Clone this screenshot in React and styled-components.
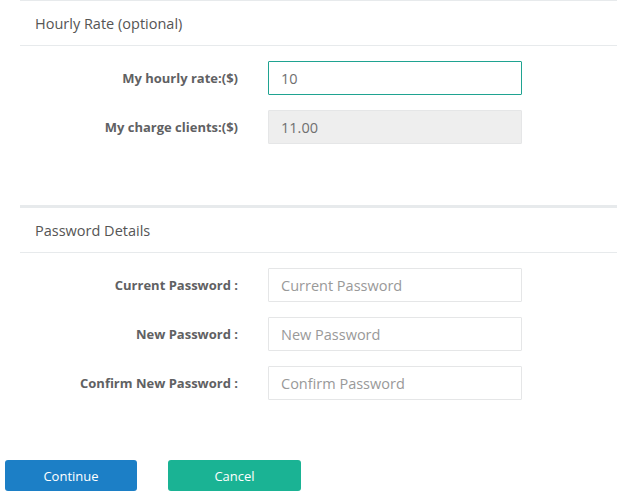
import React from 'react'
import styled, { createGlobalStyle } from 'styled-components'

const Global = createGlobalStyle`
  html, body {
    margin: 0;
    padding: 0;
    background: #fff;
    font-family: "Open Sans", "Liberation Sans", Arial, sans-serif;
    color: #676a6c;
  }
  * { box-sizing: border-box; }
`

const Page = styled.div`
  width: 617px;
  padding-bottom: 8px;
`

const Panel = styled.section`
  margin-left: 20px;
  border-top: ${p => (p.thick ? '3px solid #e7eaec' : '1px solid #e7eaec')};
  padding-bottom: ${p => p.bottom}px;
`

const PanelTitle = styled.div`
  height: 45px;
  display: flex;
  align-items: center;
  padding-left: 15px;
  font-size: 14.5px;
  color: #555;
  border-bottom: 1px solid #e7eaec;
`

const Form = styled.div`
  padding-top: 15px;
  display: flex;
  flex-direction: column;
  gap: 15px;
`

const Row = styled.div`
  display: grid;
  grid-template-columns: 218px 254px;
  column-gap: 30px;
  align-items: center;
`

const Label = styled.label`
  text-align: right;
  font-size: 13px;
  font-weight: 700;
  color: #5f6163;
`

const Input = styled.input`
  height: 34px;
  width: 254px;
  padding: 0 12px;
  font-family: inherit;
  font-size: 14.5px;
  color: #707070;
  border: 1px solid ${p => (p.active ? '#1fa391' : '#e5e6e7')};
  background: ${p => (p.readOnly ? '#eeeeee' : '#fff')};
  outline: none;
  border-radius: 1px;
  &::placeholder {
    color: #999;
  }
`

const Actions = styled.div`
  display: flex;
  gap: 31px;
  padding-left: 5px;
`

const Button = styled.button`
  width: ${p => p.w}px;
  height: 31px;
  border: none;
  border-radius: 3px;
  font-family: inherit;
  font-size: 13px;
  color: #fff;
  background: ${p => p.color};
  cursor: pointer;
`

export default function App() {
  return (
    <Page>
      <Global />
      <Panel bottom={61}>
        <PanelTitle>Hourly Rate (optional)</PanelTitle>
        <Form>
          <Row>
            <Label>My hourly rate:($)</Label>
            <Input active defaultValue="10" />
          </Row>
          <Row>
            <Label>My charge clients:($)</Label>
            <Input readOnly value="11.00" />
          </Row>
        </Form>
      </Panel>
      <Panel thick bottom={60}>
        <PanelTitle>Password Details</PanelTitle>
        <Form>
          <Row>
            <Label>Current Password :</Label>
            <Input type="text" placeholder="Current Password" />
          </Row>
          <Row>
            <Label>New Password :</Label>
            <Input type="text" placeholder="New Password" />
          </Row>
          <Row>
            <Label>Confirm New Password :</Label>
            <Input type="text" placeholder="Confirm Password" />
          </Row>
        </Form>
      </Panel>
      <Actions>
        <Button w={132} color="#1c7fc6">Continue</Button>
        <Button w={133} color="#1ab394">Cancel</Button>
      </Actions>
    </Page>
  )
}
